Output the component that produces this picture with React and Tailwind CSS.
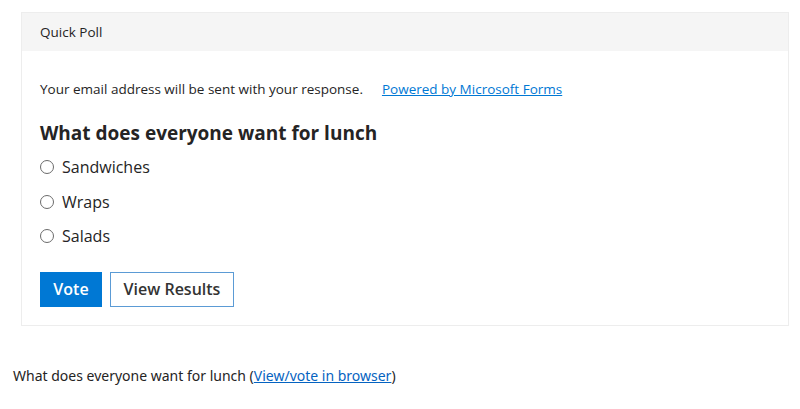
export default function App() {
  const font = { fontFamily: '"Open Sans", "Noto Sans", sans-serif' };
  return (
    <div className="w-[800px] h-[409px] bg-white text-[#252424] pt-[12px]" style={font}>
      <div className="ml-[21px] w-[768px] border border-[#ededed]">
        <div className="h-[38px] bg-[#f5f5f5] flex items-center pl-[18px] text-[13.5px]">Quick Poll</div>
        <div className="px-[18px] pt-[28px] pb-[18px]">
          <div className="h-[20px] flex items-center text-[13.5px]">
            <span>Your email address will be sent with your response.</span>
            <a href="#" className="ml-[19px] text-[#0078d4] underline">Powered by Microsoft Forms</a>
          </div>
          <div className="mt-[21px] h-[26px] flex items-center text-[19px] font-bold">What does everyone want for lunch</div>
          <div className="mt-[4px] flex flex-col">
            {["Sandwiches", "Wraps", "Salads"].map((o) => (
              <label key={o} className="h-[34.5px] flex items-center text-[16px]">
                <span className="w-[14px] h-[14px] rounded-full border border-[#6b6b6b] mr-[8px] bg-white"></span>
                {o}
              </label>
            ))}
          </div>
          <div className="mt-[18px] flex gap-[8px]">
            <button className="w-[62px] h-[35px] bg-[#0078d4] text-white text-[16px] font-semibold">Vote</button>
            <button className="w-[124px] h-[35px] border border-[#5b9bd5] bg-white text-[#333] text-[16px] font-semibold">View Results</button>
          </div>
        </div>
      </div>
      <div className="mt-[40px] ml-[13px] h-[20px] flex items-center text-[14px]" style={{ fontFamily: '"Noto Sans", sans-serif' }}>
        <span>What does everyone want for lunch (</span>
        <a href="#" className="text-[#0563c1] underline">View/vote in browser</a>
        <span>)</span>
      </div>
    </div>
  );
}
